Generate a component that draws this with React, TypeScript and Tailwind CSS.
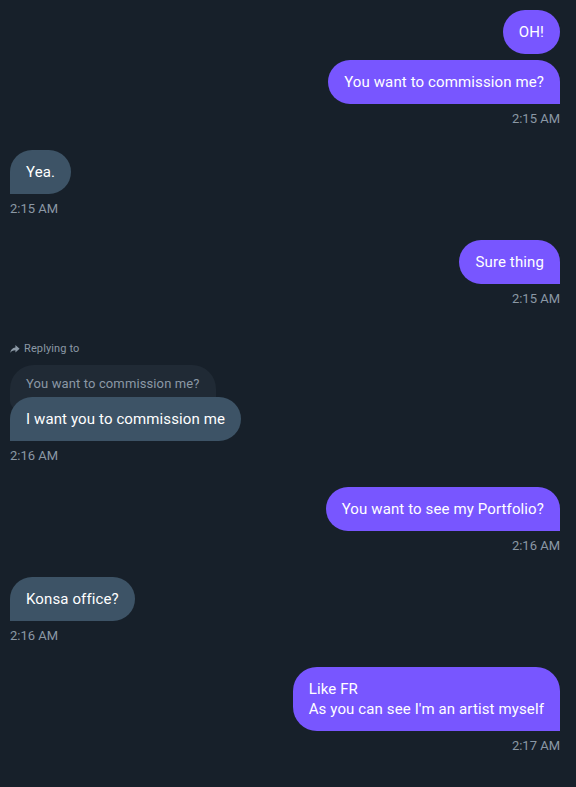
import React from "react";

const font = { fontFamily: "Roboto, 'Liberation Sans', Arial, sans-serif" };

function Time({ t, right }: { t: string; right?: boolean }) {
  return (
    <div className={`mt-[7px] text-[13px] leading-[16px] tracking-normal text-[#8b98a5] ${right ? "text-right" : "text-left"}`}>{t}</div>
  );
}

function Sent({ children, last }: { children: React.ReactNode; last?: boolean }) {
  return (
    <div className="flex justify-end">
      <div
        className={`bg-[#7856ff] text-white text-[15px] leading-[20px] px-4 py-3 rounded-3xl ${last ? "rounded-br-none" : ""}`}
      >
        {children}
      </div>
    </div>
  );
}

function Recv({ children }: { children: React.ReactNode }) {
  return (
    <div className="flex justify-start">
      <div className="bg-[#3d5366] text-white text-[15px] leading-[20px] px-4 py-3 rounded-3xl rounded-bl-none">
        {children}
      </div>
    </div>
  );
}

export default function App() {
  return (
    <div className="w-[576px] h-[787px] bg-[#17202a] pl-[10px] pr-[16px] pt-[10px] overflow-hidden tracking-[0.12px]" style={font}>
      <div className="flex flex-col gap-[6px]">
        <Sent>OH!</Sent>
        <Sent last>You want to commission me?</Sent>
      </div>
      <Time t="2:15 AM" right />

      <div className="mt-[23px]">
        <Recv>Yea.</Recv>
        <Time t="2:15 AM" />
      </div>

      <div className="mt-[23px]">
        <Sent last>Sure thing</Sent>
        <Time t="2:15 AM" right />
      </div>

      <div className="mt-[34px]">
        <div className="flex items-center gap-[4px] text-[11px] leading-[16px] text-[#8b98a5]">
          <svg width="10" height="10" viewBox="0 0 24 24" fill="#8b98a5">
            <path d="M13 2.5l10 9-10 9v-5.5c-6 0-10 2-12.5 6.5 1-7.5 5-12 12.5-13v-6z" />
          </svg>
          <span>Replying to</span>
        </div>
        <div className="mt-[8px] flex flex-col items-start">
          <div className="bg-[#202a35] text-[#8b98a5] text-[13px] leading-[18px] px-4 pt-[10px] pb-[16px] rounded-t-3xl rounded-b-lg">
            You want to commission me?
          </div>
          <div className="-mt-[12px] bg-[#3d5366] text-white text-[15px] leading-[20px] px-4 py-3 rounded-3xl rounded-bl-none">
            I want you to commission me
          </div>
        </div>
        <Time t="2:16 AM" />
      </div>

      <div className="mt-[23px]">
        <Sent last>You want to see my Portfolio?</Sent>
        <Time t="2:16 AM" right />
      </div>

      <div className="mt-[23px]">
        <Recv>Konsa office?</Recv>
        <Time t="2:16 AM" />
      </div>

      <div className="mt-[23px]">
        <Sent last>
          <div>Like FR</div>
          <div>As you can see I'm an artist myself</div>
        </Sent>
        <Time t="2:17 AM" right />
      </div>
    </div>
  );
}
